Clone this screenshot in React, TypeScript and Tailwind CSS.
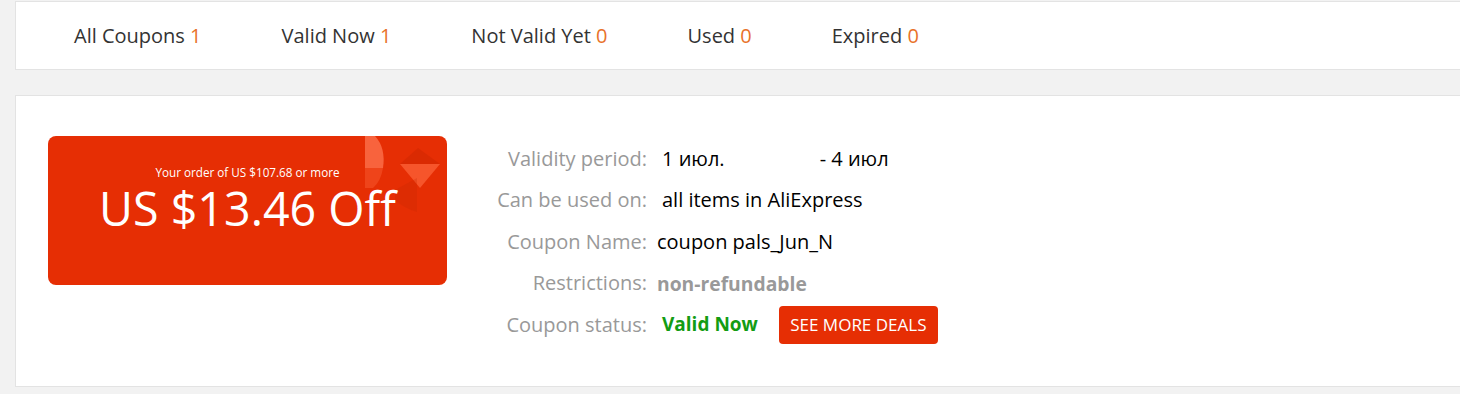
import React from "react";

const tabs = [
  { label: "All Coupons", count: 1 },
  { label: "Valid Now", count: 1 },
  { label: "Not Valid Yet", count: 0 },
  { label: "Used", count: 0 },
  { label: "Expired", count: 0 },
];

function CouponCard() {
  return (
    <div className="relative w-[399px] h-[149px] rounded-[8px] bg-[#e62e04] overflow-hidden flex flex-col items-center text-white">
      {/* decorative shapes top-right */}
      <svg className="absolute inset-0" width="399" height="149" viewBox="0 0 399 149">
        <path d="M317 0 L327 0 Q338 12 335 32 L317 32 Z" fill="#ff7a55" opacity="0.7" />
        <path d="M317 32 L335 32 Q333 45 325 52 L317 52 Z" fill="#f5542a" opacity="0.6" />
        <path d="M370 12 L392 28 L352 28 Z" fill="#cc2600" opacity="0.45" />
        <path d="M352 28 L392 28 L372 52 Z" fill="#ff6a40" opacity="0.65" />
        <path d="M347 54 L369 42 L369 76 Q356 72 347 64 Z" fill="#c42600" opacity="0.25" />
      </svg>
      <div className="relative mt-[30px] text-[11.7px] leading-[13px]">
        Your order of US $107.68 or more
      </div>
      <div className="relative mt-[6px] text-[46.6px] leading-[46px] font-normal">
        US $13.46 Off
      </div>
    </div>
  );
}

function Row({ label, children }: { label: string; children: React.ReactNode }) {
  return (
    <div className="flex items-center h-[41.5px]">
      <div className="w-[167px] text-right text-[#999]">{label}</div>
      <div className="flex items-center">{children}</div>
    </div>
  );
}

export default function App() {
  return (
    <div
      className="min-h-[394px] bg-[#f2f2f2] pl-[15px] pt-[1px] overflow-hidden"
      style={{ fontFamily: '"Open Sans", "Noto Sans", sans-serif' }}
    >
      <div className="h-[69px] bg-white border border-r-0 border-[#e3e3e3] flex items-center pl-[18px]">
        {tabs.map((t) => (
          <div key={t.label} className="px-[40px] text-[20px] text-[#333] leading-none">
            {t.label} <span className="text-[#e8722a]">{t.count}</span>
          </div>
        ))}
      </div>

      <div className="mt-[25px] h-[292px] bg-white border border-r-0 border-[#e3e3e3] flex items-start pl-[32px] pt-[40px]">
        <CouponCard />
        <div className="ml-[33px] mt-[2px] text-[20px] leading-none">
          <Row label="Validity period:">
            <span className="ml-[15px] text-black">1 июл.</span>
            <span className="ml-[95px] text-black">- 4 июл</span>
          </Row>
          <Row label="Can be used on:">
            <span className="ml-[15px] text-black">all items in AliExpress</span>
          </Row>
          <Row label="Coupon Name:">
            <span className="ml-[10px] text-black">coupon pals_Jun_N</span>
          </Row>
          <Row label="Restrictions:">
            <span className="ml-[10px] text-[19.3px] text-[#999] font-bold">non-refundable</span>
          </Row>
          <Row label="Coupon status:">
            <span className="ml-[15px] text-[19px] text-[#139c13] font-bold">Valid Now</span>
            <button className="ml-[21px] h-[38px] w-[159px] rounded-[4px] bg-[#e62e04] text-white text-[17px]">
              SEE MORE DEALS
            </button>
          </Row>
        </div>
      </div>
    </div>
  );
}
